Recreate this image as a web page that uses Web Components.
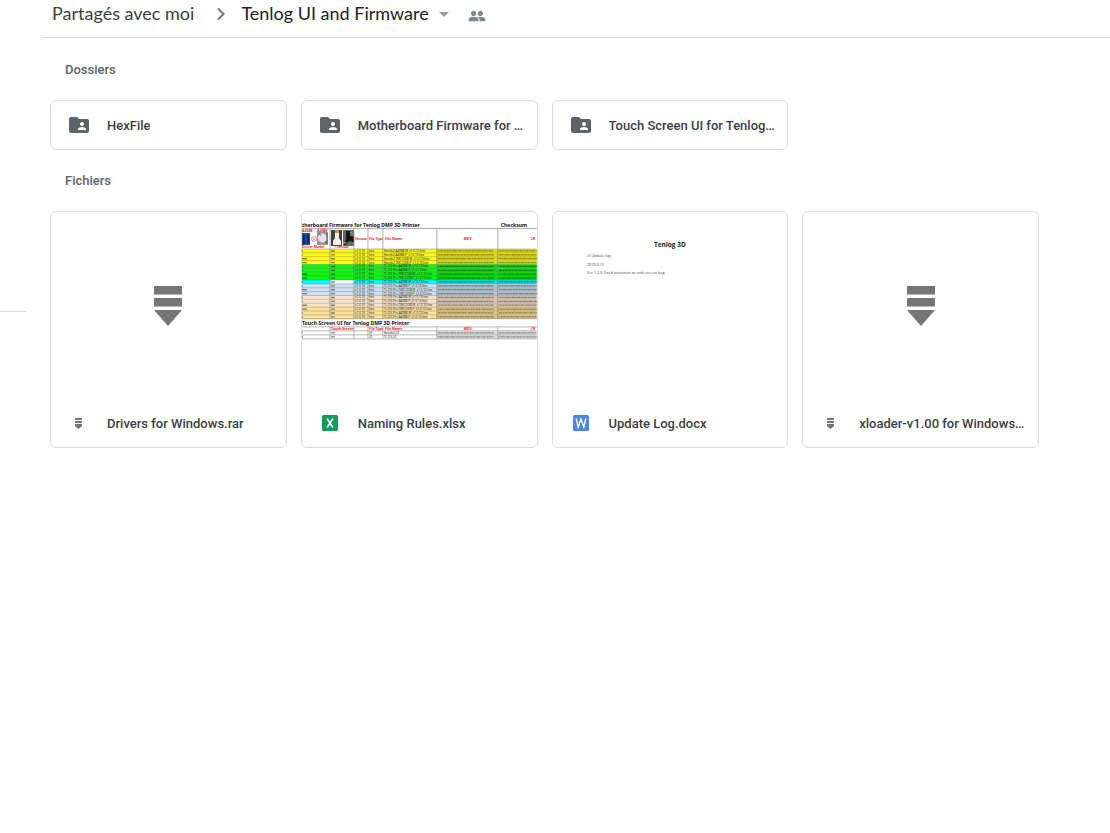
<!DOCTYPE html>
<html lang="fr">
<head>
<meta charset="utf-8">
<title>Tenlog UI and Firmware</title>
<style>
  body {
    margin: 0;
    min-height: 100vh;
    background: #fff;
    color: #3c4043;
    font-family: Roboto, "Liberation Sans", sans-serif;
    font-size: 13px;
  }
</style>
</head>
<body>
<drive-app>
  <drive-path slot="path"></drive-path>
  <drive-section heading="Dossiers">
    <folder-card>HexFile</folder-card>
    <folder-card>Motherboard Firmware for …</folder-card>
    <folder-card>Touch Screen UI for Tenlog…</folder-card>
  </drive-section>
  <drive-section heading="Fichiers">
    <file-card type="archive">Drivers for Windows.rar<archive-preview slot="preview"></archive-preview></file-card>
    <file-card type="sheet">Naming Rules.xlsx<sheet-preview slot="preview"></sheet-preview></file-card>
    <file-card type="doc">Update Log.docx<doc-preview slot="preview"></doc-preview></file-card>
    <file-card type="archive">xloader-v1.00 for Windows…<archive-preview slot="preview"></archive-preview></file-card>
  </drive-section>
</drive-app>

<script>
const icons = {
  folder: '<svg width="24" height="24" viewBox="0 0 24 24"><path fill="#5f6368" d="M20 6h-8l-2-2H4c-1.100 0-2 .9-2 2v12c0 1.100.9 2 2 2h16c1.100 0 2-.9 2-2V8c0-1.100-.9-2-2-2zm-5 3c1.100 0 2 .9 2 2s-.9 2-2 2-2-.9-2-2 .9-2 2-2zm4 8h-8v-1c0-1.330 2.670-2 4-2s4 .67 4 2v1z"/></svg>',
  archive: '<svg width="8" height="11" viewBox="0 0 8 11"><path fill="#757575" d="M0 0h7v2H0zM0 3h7v2H0zM0 6h7v2L3.500 11 0 8z"/></svg>',
  sheet: '<svg width="16" height="16" viewBox="0 0 16 16"><rect width="16" height="16" rx="1.500" fill="#0f9d58"/><path d="M5 3.500l6 9M11 3.500l-6 9" stroke="#fff" stroke-width="1.600"/></svg>',
  doc: '<svg width="16" height="16" viewBox="0 0 16 16"><rect width="16" height="16" rx="1.500" fill="#4a86e8"/><path d="M3.200 3.500l2 8.500L8 4l2.800 8 2-8.500" fill="none" stroke="#fff" stroke-width="1.400"/></svg>',
};

class DriveApp extends HTMLElement {
  constructor() {
    super();
    this.attachShadow({ mode: 'open' }).innerHTML = `
      <style>
        :host {
          display: flex;
          gap: 16px;
          min-height: 100vh;
        }
        aside {
          flex: 0 0 26px;
        }
        hr {
          margin: 311px 0 0;
          border: 0;
          border-top: 1px solid #dadce0;
        }
        main {
          flex: 1;
          min-width: 0;
        }
        .content {
          padding: 1px 71px 24px 8px;
        }
      </style>
      <aside><hr></aside>
      <main>
        <slot name="path"></slot>
        <div class="content"><slot></slot></div>
      </main>
    `;
  }
}

class DrivePath extends HTMLElement {
  constructor() {
    super();
    this.attachShadow({ mode: 'open' }).innerHTML = `
      <style>
        :host {
          display: block;
          border-bottom: 1px solid #dadce0;
        }
        nav {
          display: flex;
          align-items: center;
          height: 25px;
          padding: 0 10px 12px;
          font-family: Lato, sans-serif;
          font-size: 18px;
          line-height: 24px;
        }
        a {
          color: #3c4043;
          text-decoration: none;
        }
        button {
          display: flex;
          align-items: center;
          padding: 0;
          border: 0;
          background: none;
          color: #202124;
          font: inherit;
        }
        .arrow {
          margin: 2px 8px 0 15px;
        }
        .current {
          gap: 10px;
        }
        .people {
          margin-left: 19px;
          padding-top: 6px;
        }
      </style>
      <nav aria-label="Chemin">
        <a href="#">Partagés avec moi</a>
        <svg class="arrow" width="24" height="24" viewBox="0 0 24 24"><path fill="none" stroke="#777" stroke-width="2" d="M9 6.500l5.500 5.500L9 17.500"/></svg>
        <button class="current">Tenlog UI and Firmware
          <svg width="10" height="9" viewBox="0 0 10 9"><path fill="#9a9da0" d="M0 4h10L5 9z"/></svg>
        </button>
        <button class="people" aria-label="Partager">
          <svg width="18" height="18" viewBox="0 0 24 24"><path fill="#80868b" d="M16.500 13c-1.200 0-3.070.34-4.500 1-1.430-.67-3.300-1-4.500-1C5.330 13 1 14.080 1 16.250V19h22v-2.750c0-2.170-4.330-3.250-6.500-3.250zM7.500 12C9.430 12 11 10.430 11 8.500S9.430 5 7.500 5 4 6.570 4 8.500 5.570 12 7.500 12zm9 0c1.930 0 3.500-1.570 3.500-3.500S18.430 5 16.500 5 13 6.570 13 8.500s1.570 3.500 3.500 3.500z"/><path stroke="#fff" stroke-width="1.500" d="M13.500 14.500c1.500 1 1.500 2 1.500 4.500" fill="none"/></svg>
        </button>
      </nav>
    `;
  }
}

class DriveSection extends HTMLElement {
  connectedCallback() {
    this.attachShadow({ mode: 'open' }).innerHTML = `
      <style>
        :host {
          display: block;
        }
        h2 {
          margin: 0;
          padding-left: 15px;
          color: #5f6368;
          font-size: 13px;
          font-weight: 500;
          line-height: 61px;
        }
        .grid {
          display: grid;
          grid-template-columns: repeat(auto-fill, minmax(200px, 1fr));
          gap: 14px;
        }
      </style>
      <h2>${this.getAttribute('heading')}</h2>
      <div class="grid"><slot></slot></div>
    `;
  }
}

const cardStyle = `
  :host {
    display: block;
    min-width: 0;
  }
  a {
    display: block;
    overflow: hidden;
    border: 1px solid #dadce0;
    border-radius: 6px;
    color: inherit;
    text-decoration: none;
  }
  .name {
    display: flex;
    align-items: center;
    gap: 16px;
    height: 48px;
    padding: 0 8px 0 16px;
    font-weight: 500;
  }
  .icon {
    display: flex;
    flex: 0 0 24px;
    align-items: center;
    justify-content: center;
  }
  .label {
    overflow: hidden;
    text-overflow: ellipsis;
    white-space: nowrap;
  }
`;

class FolderCard extends HTMLElement {
  constructor() {
    super();
    this.attachShadow({ mode: 'open' }).innerHTML = `
      <style>${cardStyle}</style>
      <a href="#">
        <div class="name"><span class="icon">${icons.folder}</span><span class="label"><slot></slot></span></div>
      </a>
    `;
  }
}

class FileCard extends HTMLElement {
  connectedCallback() {
    this.attachShadow({ mode: 'open' }).innerHTML = `
      <style>
        ${cardStyle}
        .preview {
          height: 187px;
          overflow: hidden;
        }
      </style>
      <a href="#">
        <div class="preview"><slot name="preview"></slot></div>
        <div class="name"><span class="icon">${icons[this.getAttribute('type')]}</span><span class="label"><slot></slot></span></div>
      </a>
    `;
  }
}

class ArchivePreview extends HTMLElement {
  constructor() {
    super();
    this.attachShadow({ mode: 'open' }).innerHTML = `
      <style>
        :host {
          display: flex;
          align-items: center;
          justify-content: center;
          height: 100%;
        }
      </style>
      <svg width="28" height="41" viewBox="0 0 28 41"><path fill="#757575" d="M0 1h28v8.500H0zM0 13h28v8.500H0zM0 25h28L14 41z"/></svg>
    `;
  }
}

const previewStyle = `
  :host {
    display: block;
  }
  svg {
    display: block;
    width: 100%;
  }
`;

class DocPreview extends HTMLElement {
  constructor() {
    super();
    this.attachShadow({ mode: 'open' }).innerHTML = `
      <style>${previewStyle}</style>
      <svg viewBox="0 0 235 187" font-family="Open Sans, sans-serif" font-size="3.700" fill="#444">
        <text x="117" y="35" font-size="6.500" font-weight="700" fill="#222" text-anchor="middle">Tenlog 3D</text>
        <text x="34" y="45">UI Update log:</text>
        <text x="34" y="54">2019-9-10</text>
        <text x="34" y="62">Ver 1.2.3: Fixed activation qr code screen bug.</text>
      </svg>
    `;
  }
}

class SheetPreview extends HTMLElement {
  constructor() {
    super();
    const rowHeight = 3.88;
    const top = 37;
    const columns = [28, 52, 66, 81, 135, 196];
    const colors = [
      ...Array(4).fill('#ffff00'),
      ...Array(4).fill('#00ff00'),
      '#00ffff',
      ...Array(3).fill('#cfe2f3'),
      ...Array(3).fill('#fce5cd'),
      ...Array(3).fill('#ffe599'),
    ];
    const boards = ['A4988-M', 'A4988-P', 'TMC2208-M', 'TMC2208-P'];

    // the checksums are too small to read at this size, so they are drawn as marks
    const marks = (y, i) => `
      <path stroke="#111" stroke-opacity=".45" stroke-width="1.300" stroke-dasharray="1.300 .3 .6 .4 1.900 .3 .9 .5" stroke-dashoffset="${i * 1.7}"
        d="M136 ${y}h56M197 ${y}h38"/>
      <path stroke="#111" stroke-opacity=".5" stroke-width="1.400"
        d="${i % 4 > 1 ? `M0 ${y}h5` : `M0 ${y}h1`}M29 ${y}h4"/>
      <path fill="#000" fill-opacity=".13" d="M135 ${y - 1.6}h100v3.200H135z"/>`;

    const rows = colors.map((color, i) => {
      const y = top + i * rowHeight;
      const name = `${i < 4 ? 'Hands2' : 'TL-D3-Pro'}-${boards[i % 4]}_v1.0.10.hex`;
      return `<rect y="${y}" width="235" height="${rowHeight}" fill="${color}"/>
        ${i === 8 ? `<rect x="28" y="${y}" width="24" height="${rowHeight}" fill="#fff"/>` : ''}
        ${marks(y + 2, i)}
        <g font-size="3" font-weight="400" fill="#222">
          <text x="53" y="${y + 3}">v1.0.10</text>
          <text x="67" y="${y + 3}">hex</text>
          <text x="82" y="${y + 3}">${name}</text>
        </g>
        <path stroke="#333" stroke-opacity=".55" stroke-width=".5" d="M0 ${y}h235"/>`;
    }).join('');
    const bottom = top + colors.length * rowHeight;

    this.attachShadow({ mode: 'open' }).innerHTML = `
      <style>${previewStyle}</style>
      <svg viewBox="0 0 235 187" font-family="Noto Sans, sans-serif" font-size="3.500" font-weight="700">
        <g font-size="5.100" fill="#111">
          <text x="0" y="15">therboard Firmware for Tenlog DMP 3D Printer</text>
          <text x="199" y="15">Checksum</text>
          <text x="0" y="113">Touch Screen UI for Tenlog DMP 3D Printer</text>
        </g>

        <rect x="0" y="21" width="8" height="12" fill="#124a9c"/>
        <path fill="#0b2f68" d="M1 23h2v9H1zM5 22h2v9H5z"/>
        <circle cx="12" cy="27" r="2.500" fill="none" stroke="#f55" stroke-width=".6"/>
        <path d="M10 25l4 4M14 25l-4 4" stroke="#f55" stroke-width=".5"/>
        <rect x="15" y="20" width="11" height="13" fill="#999"/>
        <circle cx="20.500" cy="26" r="4.500" fill="#e4e4e4"/>
        <path d="M17 21l2 3M23 29l2 3M25 21v11" stroke="#444" stroke-width=".7"/>
        <rect x="29" y="18" width="11" height="16" fill="#3e3e3e"/>
        <path fill="#f3f1ed" d="M33 20h4v6l2 3v4h-8v-4l2-3z"/>
        <path fill="#d98b45" d="M33 18h4v3h-4z"/>
        <rect x="41" y="18" width="11" height="16" fill="#6a6865"/>
        <path fill="#171717" d="M44 19h4v5l4 1v5l-5-1-3 4h-2l2-6z"/>
        <path stroke="#aaa" d="M41 31h4M48 20l3 2"/>

        <g fill="#f01818">
          <text x="0" y="20">A4988</text>
          <text x="15" y="20">A4988</text>
          <text x="0" y="36">Driver Model</text>
          <text x="32" y="36">T Sensor</text>
          <text x="53" y="28" font-size="3.300">Version</text>
          <text x="67" y="28" font-size="3.300">File Type</text>
          <text x="83" y="28">File Name</text>
          <text x="162" y="28">MD5</text>
          <text x="229" y="28">CR</text>
        </g>

        ${rows}
        <path fill="none" stroke="#777" stroke-width=".6" d="M0 16.500h235M0 ${bottom}h235${columns.map((x) => `M${x} 16.500V${bottom}`).join('')}"/>

        <g fill="#f01818">
          <text x="29" y="118">Touch Screen</text>
          <text x="67" y="118" font-size="3.300">File Type</text>
          <text x="83" y="118">File Name</text>
          <text x="162" y="118">MD5</text>
          <text x="229" y="118">CR</text>
        </g>
        ${marks(121, 1)}${marks(125, 4)}
        <g font-size="3" font-weight="400" fill="#222">
          <text x="67" y="122">UI</text>
          <text x="82" y="122">Hands2-UI</text>
          <text x="67" y="126">UI</text>
          <text x="82" y="126">TL-D3-UI</text>
        </g>
        <path fill="none" stroke="#888" stroke-width=".6" d="M0 115h235M0 119h235M0 123h235M0 127h235${columns.map((x) => `M${x} 115v12`).join('')}"/>
      </svg>
    `;
  }
}

customElements.define('drive-app', DriveApp);
customElements.define('drive-path', DrivePath);
customElements.define('drive-section', DriveSection);
customElements.define('folder-card', FolderCard);
customElements.define('file-card', FileCard);
customElements.define('archive-preview', ArchivePreview);
customElements.define('doc-preview', DocPreview);
customElements.define('sheet-preview', SheetPreview);
</script>
</body>
</html>
